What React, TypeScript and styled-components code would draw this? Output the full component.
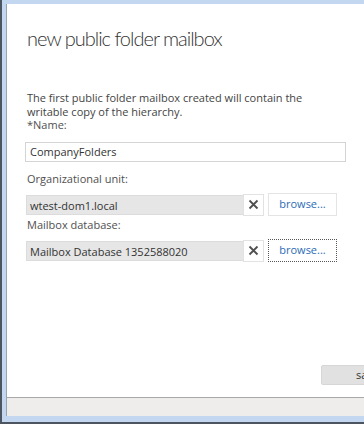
import styled, { createGlobalStyle } from 'styled-components';

const GlobalStyle = createGlobalStyle`
  html, body {
    margin: 0;
    padding: 0;
    background: #ffffff;
  }
  #root {
    width: 364px;
    height: 424px;
    overflow: hidden;
  }
`;

const Frame = styled.div`
  box-sizing: border-box;
  width: 440px;
  height: 424px;
  background: #c3d7f0;
  border-left: 2px solid #4d5560;
  border-bottom: 2px solid #4d5560;
  padding: 4px 0 6px 4px;
  display: flex;
`;

const Panel = styled.div`
  flex: 1;
  display: flex;
  flex-direction: column;
  background: #ffffff;
  border-left: 1px solid #9aa4b0;
  font-family: 'Open Sans', 'Noto Sans', sans-serif;
  color: #444444;
`;

const Content = styled.div`
  flex: 1;
  display: flex;
  flex-direction: column;
  padding: 21px 0 0 20px;
`;

const Title = styled.h1`
  margin: 0;
  font-family: Lato, 'Open Sans', sans-serif;
  font-size: 20px;
  font-weight: 300;
  letter-spacing: -1px;
  color: #333333;
  line-height: 26px;
`;

const Intro = styled.p`
  margin: 40px 0 0;
  font-size: 11px;
  line-height: 13.5px;
`;

const Label = styled.div<{ $gap?: number }>`
  font-size: 11px;
  line-height: 13px;
  color: #505050;
  margin-top: ${(p) => p.$gap ?? 0}px;
`;

const TextBox = styled.div`
  box-sizing: border-box;
  width: 321px;
  margin: 11px 0 0 -2px;
  height: 20px;
  border: 1px solid #d4d4d4;
  padding: 0 4px;
  font-size: 11px;
  line-height: 18px;
  color: #333333;
`;

const PickerRow = styled.div`
  display: flex;
  align-items: center;
  margin: 8px 0 0 -1px;
`;

const ReadOnlyBox = styled.div`
  box-sizing: border-box;
  width: 217px;
  height: 20px;
  background: #e6e6e6;
  border: 1px solid #dcdcdc;
  border-right: none;
  padding: 0 3px;
  font-size: 11px;
  line-height: 19px;
  color: #333333;
`;

const ClearButton = styled.div`
  box-sizing: border-box;
  width: 21px;
  height: 22px;
  background: #ffffff;
  border: 1px solid #e2e2e2;
  display: flex;
  align-items: center;
  justify-content: center;
`;

const BrowseButton = styled.div<{ $focused?: boolean }>`
  box-sizing: border-box;
  margin-left: 4px;
  width: 69px;
  height: 23px;
  border: 1px ${(p) => (p.$focused ? 'dotted #555555' : 'solid #e4e4e4')};
  color: #2b6cb8;
  font-size: 11px;
  line-height: 19px;
  text-align: center;
`;

const Actions = styled.div`
  margin-top: auto;
  margin-bottom: 12px;
  display: flex;
`;

const SaveButton = styled.div`
  box-sizing: border-box;
  margin-left: 294px;
  width: 80px;
  height: 20px;
  background: #e1e1e1;
  border: 1px solid #d6d6d6;
  border-radius: 2px;
  font-size: 11px;
  line-height: 18px;
  color: #333333;
  padding-left: 34px;
`;

const Footer = styled.div`
  height: 18px;
  background: #efedec;
  border-top: 1px solid #a9a9a9;
`;

const ClearIcon = () => (
  <svg width="11" height="11" viewBox="0 0 11 11">
    <path d="M1.5 1.5 L9.5 9.5 M9.5 1.5 L1.5 9.5" stroke="#505050" strokeWidth="1.8" />
  </svg>
);

export default function App() {
  return (
    <>
      <GlobalStyle />
      <Frame>
        <Panel>
          <Content>
            <Title>new public folder mailbox</Title>
            <Intro>
              The first public folder mailbox created will contain the
              <br />
              writable copy of the hierarchy.
            </Intro>
            <Label>*Name:</Label>
            <TextBox>CompanyFolders</TextBox>
            <Label $gap={10}>Organizational unit:</Label>
            <PickerRow>
              <ReadOnlyBox>wtest-dom1.local</ReadOnlyBox>
              <ClearButton>
                <ClearIcon />
              </ClearButton>
              <BrowseButton>browse...</BrowseButton>
            </PickerRow>
            <Label $gap={2}>Mailbox database:</Label>
            <PickerRow>
              <ReadOnlyBox>Mailbox Database 1352588020</ReadOnlyBox>
              <ClearButton>
                <ClearIcon />
              </ClearButton>
              <BrowseButton $focused>browse...</BrowseButton>
            </PickerRow>
            <Actions>
              <SaveButton>save</SaveButton>
            </Actions>
          </Content>
          <Footer />
        </Panel>
      </Frame>
    </>
  );
}
